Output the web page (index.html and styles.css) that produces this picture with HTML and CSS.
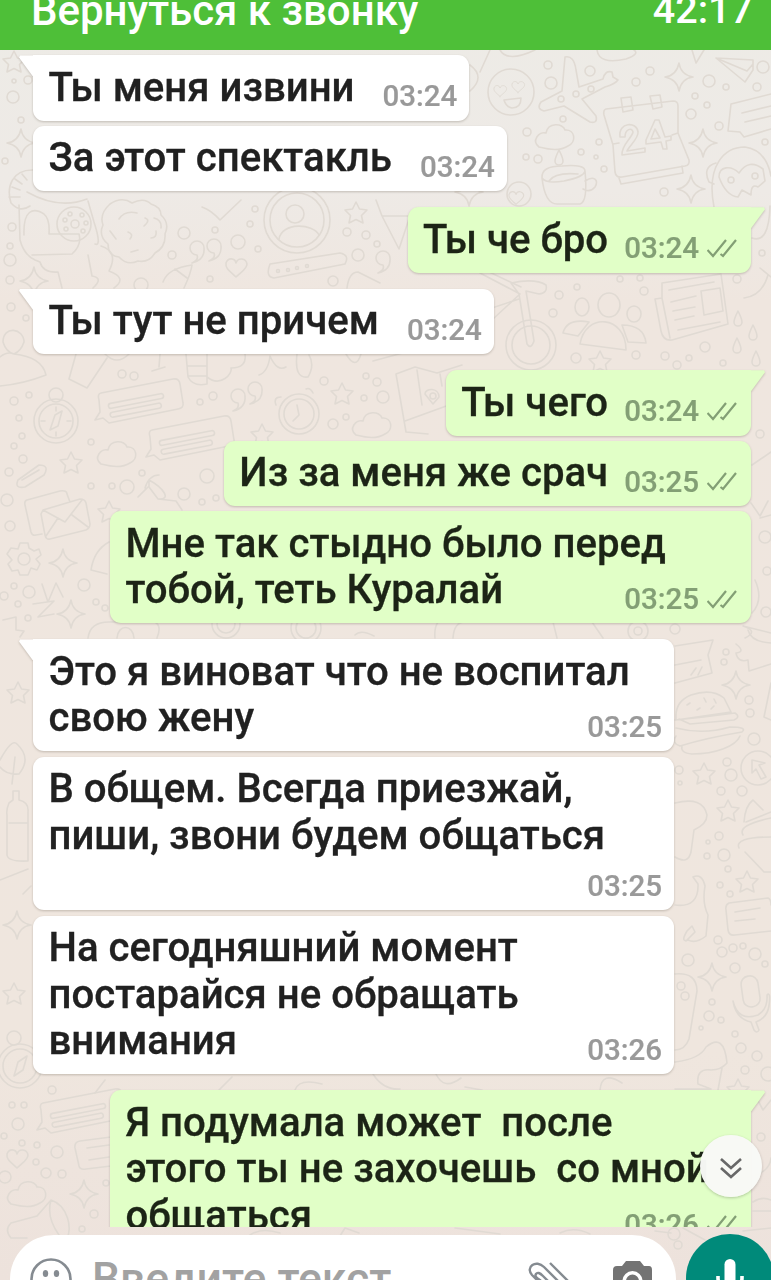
FILE: index.html
```html
<!DOCTYPE html>
<html lang="ru">
<head>
<meta charset="utf-8">
<title>Чат</title>
<link rel="stylesheet" href="styles.css">
</head>
<body>
<div class="screen">
  <svg class="wallpaper" viewBox="0 0 771 1280" aria-hidden="true">
    <defs>
      <path id="ticks" d="M.5 11.500 6 17.500 19 1.500M13.500 15.500 16 17.500 29 1.500"/>
      <path id="star" d="M0-11 3.5-4 11-3 5.500 2.500 7 10 0 6.500-7 10-5.500 2.500-11-3-3.500-4Z"/>
      <path id="spark" d="M0-14Q1.500-2.500 14 0Q2.500 1.500 0 14Q-1.500 2.500-14 0Q-2.500-1.500 0-14Z"/>
      <path id="heart" d="M0 9C-5 4-11 1-10-5C-8-11-1-10 0-5C2-11 10-10 11-4C11 1 5 4 0 9Z"/>
      <path id="drop" d="M0-8Q-4 0-4 3A4 4 0 0 0 4 3Q4 0 0-8Z"/>
      <path id="quote" d="M-4 9Q3 6 1 1A7 7 0 1 1 8-6Q9 6-4 9Z"/>
      <path id="cloud" d="M-16 9C-24 3-16-7-9-5C-7-16 8-15 10-8C20-9 22 4 13 8C5 13-4 12-16 9Z"/>
      <g id="bubble"><path d="M-38-13 34-27Q40-28 41-22L44-3Q45 2 39 3L-30 17-36 12-44 14-39 6-40-6Q-42-12-38-13Z"/><rect x="-30" y="-8" width="56" height="5" rx="2.500" transform="rotate(-11)"/><rect x="-30" y="1" width="52" height="5" rx="2.500" transform="rotate(-11)"/></g>
      <g id="gear"><path d="M-4-16H4L5-11 10-8 15-10 17-4 12 0 16 5 13 11 7 9 4 16H-4L-6 11-12 12-16 5-12 1-17-5-13-11-6-10Z"/><circle r="6"/></g>
    </defs>
    <g class="doodles">
      <!-- small bits -->
      <use href="#star" x="14" y="62"/><use href="#spark" x="21" y="143"/><use href="#spark" x="679" y="77"/><use href="#spark" x="703" y="143"/><use href="#spark" x="691" y="189"/><use href="#spark" x="469" y="192"/>
      <use href="#star" x="356" y="213"/><use href="#spark" x="34" y="281"/><use href="#heart" x="236" y="268"/><use href="#quote" x="196" y="254"/><use href="#quote" x="213" y="252"/><use href="#quote" x="382" y="264"/><use href="#quote" x="237" y="402"/><use href="#quote" x="254" y="395"/>
      <use href="#star" x="342" y="394"/><use href="#star" x="262" y="435"/><use href="#star" x="71" y="463"/><use href="#star" x="109" y="512"/><use href="#spark" x="63" y="563"/><use href="#spark" x="71" y="614"/><use href="#star" x="600" y="362"/>
      <use href="#drop" x="738" y="319"/><use href="#drop" x="753" y="333"/><use href="#drop" x="737" y="346"/><use href="#drop" x="756" y="359"/><use href="#drop" x="559" y="158"/>
      <use href="#cloud" x="555" y="138"/><use href="#cloud" x="372" y="426"/><use href="#cloud" x="117" y="455"/><use href="#cloud" x="27" y="1195"/>
      <use href="#spark" x="736" y="685"/><use href="#star" x="704" y="774"/><use href="#star" x="728" y="811"/><use href="#star" x="747" y="882"/><use href="#spark" x="712" y="977"/><use href="#heart" x="17" y="1159"/><use href="#spark" x="84" y="1194"/><use href="#star" x="738" y="1090"/>
      <use href="#star" x="18" y="693"/><use href="#spark" x="17" y="925"/><use href="#star" x="14" y="994"/>
      <circle cx="13" cy="97" r="6"/><circle cx="14" cy="81" r="2"/><circle cx="28" cy="80" r="4"/><circle cx="21" cy="120" r="3"/><circle cx="5" cy="161" r="3"/>
      <circle cx="548" cy="65" r="4"/><circle cx="551" cy="83" r="6"/><circle cx="590" cy="71" r="5"/><circle cx="636" cy="82" r="4"/><circle cx="650" cy="71" r="4"/><circle cx="709" cy="81" r="6"/><circle cx="726" cy="87" r="3"/><circle cx="763" cy="67" r="6"/><circle cx="757" cy="87" r="4"/><circle cx="695" cy="96" r="3"/><circle cx="707" cy="105" r="3"/><circle cx="691" cy="114" r="5"/><circle cx="719" cy="126" r="4"/><circle cx="563" cy="119" r="3"/><circle cx="527" cy="132" r="4"/><circle cx="526" cy="157" r="3"/><circle cx="538" cy="159" r="4"/><circle cx="581" cy="152" r="3"/><circle cx="599" cy="142" r="3"/><circle cx="596" cy="157" r="2"/><circle cx="604" cy="169" r="3"/><circle cx="664" cy="192" r="4"/><circle cx="765" cy="142" r="3"/>
      <circle cx="12" cy="227" r="4"/><circle cx="10" cy="246" r="3"/><circle cx="10" cy="260" r="6"/><circle cx="10" cy="280" r="4"/><circle cx="11" cy="307" r="4"/><circle cx="26" cy="318" r="3"/><circle cx="184" cy="233" r="6"/><circle cx="172" cy="255" r="4"/><circle cx="215" cy="230" r="3"/><circle cx="238" cy="242" r="7"/><circle cx="258" cy="249" r="3"/><circle cx="250" cy="224" r="3"/><circle cx="255" cy="209" r="3"/><circle cx="347" cy="232" r="4"/><circle cx="366" cy="235" r="4"/><circle cx="377" cy="244" r="3"/><circle cx="358" cy="255" r="6"/><circle cx="333" cy="281" r="5"/><circle cx="210" cy="279" r="3"/><circle cx="141" cy="285" r="7"/>
      <circle cx="122" cy="374" r="4"/><circle cx="134" cy="376" r="4"/><circle cx="14" cy="401" r="4"/><circle cx="29" cy="395" r="3"/><circle cx="19" cy="418" r="3"/><circle cx="22" cy="436" r="3"/><circle cx="200" cy="402" r="3"/><circle cx="213" cy="396" r="4"/><circle cx="324" cy="381" r="4"/><circle cx="366" cy="376" r="3"/><circle cx="377" cy="382" r="4"/><circle cx="383" cy="397" r="6"/><circle cx="364" cy="398" r="3"/><circle cx="333" cy="424" r="5"/><circle cx="346" cy="417" r="3"/>
      <circle cx="620" cy="279" r="3"/><circle cx="640" cy="278" r="3"/><circle cx="559" cy="295" r="4"/><circle cx="577" cy="287" r="3"/><circle cx="644" cy="291" r="4"/><circle cx="737" cy="279" r="4"/><circle cx="553" cy="313" r="4"/><circle cx="705" cy="347" r="5"/><circle cx="576" cy="358" r="5"/><circle cx="636" cy="355" r="4"/><circle cx="665" cy="356" r="4"/><circle cx="677" cy="365" r="4"/><circle cx="689" cy="358" r="3"/><circle cx="723" cy="363" r="3"/><circle cx="762" cy="253" r="3"/><circle cx="760" cy="434" r="4"/><circle cx="765" cy="537" r="6"/><circle cx="767" cy="571" r="4"/><circle cx="766" cy="612" r="5"/>
      <circle cx="14" cy="446" r="3"/><circle cx="23" cy="459" r="4"/><circle cx="9" cy="472" r="4"/><circle cx="7" cy="500" r="6"/><circle cx="10" cy="526" r="5"/><circle cx="91" cy="442" r="3"/><circle cx="91" cy="486" r="3"/><circle cx="112" cy="486" r="3"/><circle cx="127" cy="487" r="7"/><circle cx="142" cy="473" r="3"/><circle cx="184" cy="494" r="6"/><circle cx="207" cy="476" r="7"/><circle cx="202" cy="502" r="3"/><circle cx="216" cy="498" r="3"/><circle cx="84" cy="585" r="6"/><circle cx="29" cy="592" r="6"/><circle cx="14" cy="586" r="3"/><circle cx="4" cy="596" r="4"/><circle cx="18" cy="604" r="3"/><circle cx="28" cy="618" r="3"/><circle cx="96" cy="602" r="3"/><circle cx="105" cy="608" r="3"/>
      <circle cx="726" cy="652" r="3"/><circle cx="724" cy="662" r="3"/><circle cx="749" cy="700" r="4"/><circle cx="750" cy="713" r="4"/><circle cx="754" cy="739" r="6"/><circle cx="727" cy="762" r="4"/><circle cx="731" cy="775" r="6"/><circle cx="679" cy="770" r="4"/><circle cx="680" cy="783" r="2"/><circle cx="721" cy="791" r="4"/><circle cx="742" cy="791" r="5"/><circle cx="719" cy="836" r="4"/><circle cx="708" cy="842" r="2"/><circle cx="707" cy="856" r="3"/><circle cx="724" cy="855" r="6"/><circle cx="728" cy="869" r="3"/><circle cx="720" cy="885" r="3"/><circle cx="730" cy="894" r="3"/>
      <circle cx="718" cy="940" r="4"/><circle cx="722" cy="952" r="5"/><circle cx="733" cy="948" r="4"/><circle cx="743" cy="946" r="3"/><circle cx="755" cy="954" r="6"/><circle cx="735" cy="968" r="5"/><circle cx="688" cy="960" r="6"/><circle cx="681" cy="986" r="4"/><circle cx="685" cy="996" r="4"/><circle cx="712" cy="1002" r="3"/><circle cx="709" cy="1016" r="5"/><circle cx="721" cy="1020" r="3"/><circle cx="701" cy="1028" r="2"/><circle cx="735" cy="1034" r="3"/><circle cx="741" cy="1048" r="5"/><circle cx="757" cy="1056" r="5"/><circle cx="745" cy="1070" r="4"/><circle cx="768" cy="1074" r="7"/><circle cx="765" cy="964" r="3"/>
      <circle cx="52" cy="1090" r="4"/><circle cx="12" cy="1105" r="3"/><circle cx="24" cy="1105" r="3"/><circle cx="18" cy="1124" r="6"/><circle cx="4" cy="1136" r="3"/><circle cx="22" cy="1143" r="3"/><circle cx="37" cy="1145" r="3"/><circle cx="57" cy="1152" r="6"/><circle cx="36" cy="1162" r="3"/><circle cx="46" cy="1173" r="5"/><circle cx="62" cy="1174" r="4"/><circle cx="5" cy="1177" r="6"/><circle cx="94" cy="1214" r="4"/><circle cx="106" cy="1183" r="3"/><circle cx="82" cy="1229" r="3"/><circle cx="761" cy="1137" r="4"/><circle cx="678" cy="1245" r="4"/><circle cx="674" cy="1234" r="6"/>
      <!-- emoji, plane, calendar, cup -->
      <circle cx="511" cy="92" r="23"/><use href="#heart" transform="translate(500 91) scale(.6)"/><use href="#heart" transform="translate(518 87) scale(.6)"/><path d="M504 100 521 98Q521 108 512 108Q506 107 504 100Z"/>
      <path d="M565 57Q574 55 576 70L579 87 603 79Q605 70 612 72L613 77 618 80Q615 84 605 87L582 99 596 116Q598 124 590 122L564 106 544 111Q536 109 541 102L562 91Z"/><circle cx="561" cy="99" r="3"/><circle cx="576" cy="94" r="3"/><circle cx="591" cy="89" r="3"/>
      <path d="M606 109 673 101Q678 101 678 106V133L689 160Q690 165 685 166L622 177Q616 178 615 172L613 145 604 115Q603 110 606 109ZM613 144 619 143M672 135 678 133M619 178 621 184 683 173 682 166M621 98 631 97 633 110 623 112ZM650 96 660 95 662 107 653 109Z"/>
      <path d="M620 137C618 122 637 121 638 132C639 138 629 146 627 151L645 148V152L622 155C621 145 632 138 633 132C632 127 625 129 625 137ZM655 120 659 120 665 137 671 136 671 140 666 141 667 149 663 149 661 142 646 144 646 140ZM655 129 651 139 660 138Z"/>
      <path d="M542 178Q541 166 562 166Q585 164 585 171Q584 177 564 181Q546 184 542 178Q545 204 557 204H580Q588 202 585 171M585 181C594 175 599 180 595 187Q590 193 583 189M549 181Q555 172 578 174"/>
      <path d="M716 58 753 60 753 70 745 82ZM716 58 747 71 753 64M692 50 696 63 704 50M731 104 771 94M731 104 728 131 740 132 744 137 771 129M742 113 771 106M745 122 771 116M597 50Q599 65 626 59Q640 54 634 50M500 50Q507 63 535 50M480 72 490 50M470 65Q486 77 470 91"/>
      <path d="M714 207C706 166 724 147 745 147Q766 150 771 176M716 163Q702 167 709 182L714 184M719 177C719 166 731 165 739 173Q749 158 763 169L765 181 758 187Q751 183 751 195L742 190 738 197Q726 196 719 177"/><circle cx="731" cy="180" r="3"/><circle cx="755" cy="176" r="3"/><circle cx="519" cy="194" r="12"/><use href="#heart" transform="translate(516 198) scale(.7)"/>
      <!-- astronaut, cookie, contact, belt -->
      <path d="M34 170C12 169 6 187 11 203Q20 213 30 206M22 174 27 180M15 179 22 184M12 187 20 190M9 197 20 197M27 192Q59 210 87 199M19 205 20 240Q24 255 35 260L40 262Q43 273 58 272L62 288M24 235C23 210 33 207 44 214Q50 219 49 234L79 234Q82 245 72 254L32 255M88 201 94 222Q102 247 95 244M101 246Q119 252 109 271Q128 278 114 288M88 255 92 276Q104 278 93 288M202 207Q211 210 220 220L241 200"/><circle cx="74" cy="224" r="17"/><circle cx="75" cy="224" r="4"/><circle cx="65" cy="220" r="2"/><circle cx="70" cy="214" r="2"/><circle cx="82" cy="215" r="2"/><circle cx="86" cy="223" r="2"/><circle cx="83" cy="231" r="2"/><circle cx="66" cy="229" r="2"/>
      <path d="M110 204Q122 196 132 203Q144 197 151 204Q161 207 161 215Q170 223 165 234Q166 247 155 253Q149 263 138 261Q127 266 119 257Q108 256 108 244Q98 236 103 225Q99 214 110 204ZM119 219Q125 210 137 213M145 218Q151 220 144 226M128 232Q134 234 130 239M151 238Q157 238 156 231M131 252 138 250M110 231 116 239M154 218Q162 220 161 228"/>
      <circle cx="297" cy="220" r="33"/><circle cx="297" cy="220" r="27"/><circle cx="295" cy="214" r="9"/><path d="M279 239C282 222 313 223 319 235M270 264 340 253Q350 255 345 264L274 278Q265 277 270 264ZM376 200 382 216 399 249 411 213M382 216 408 216M163 282Q168 268 192 265Q191 273 184 288M175 269 187 278M347 288Q349 272 358 272L380 283"/><circle cx="278" cy="271" r="1.500"/><circle cx="288" cy="270" r="1.500"/><circle cx="297" cy="268" r="1.500"/><circle cx="307" cy="266" r="1.500"/>
      <!-- person, tag, thumbs, clock, map -->
      <path d="M3 342C3 325 24 328 24 342Q21 351 14 354Q6 352 3 342ZM0 357Q7 351 14 354Q42 357 46 375 23 384 0 386M76 354 69 379 87 388 107 358M105 354Q117 366 129 354M186 354 188 377Q193 387 207 384L207 354M188 366H207M188 376H207M207 377C221 388 233 373 231 368Q247 368 245 354M160 354 159 367M152 371 165 367M297 354Q294 379 308 377Q315 365 309 355M259 375Q268 372 270 356 277 372 286 367M346 354Q356 371 361 354M373 361 410 351"/>
      <circle cx="56" cy="421" r="22"/><circle cx="56" cy="421" r="17"/><circle cx="56" cy="395" r="7"/><path d="M50 430 55 415 62 411 58 426ZM56 407V411M56 432V436M41 421H45M67 421H71"/>
      <use href="#bubble" x="139" y="406"/><use href="#bubble" x="190" y="443"/>
      <circle cx="299" cy="414" r="20"/><circle cx="299" cy="414" r="15"/><path d="M297 405 299 415 293 421M276 405Q273 397 281 397M306 389Q310 387 313 393"/>
      <path d="M396 374 415 367 437 373 462 365M396 374 406 432 428 434M405 421 449 405M417 370 422 405M440 374 442 386M425 394C425 388 439 387 439 397L433 404Z"/><circle cx="433" cy="396" r="3"/>
      <!-- bicycle, people, newspaper -->
      <circle cx="531" cy="345" r="25"/><circle cx="531" cy="345" r="19"/><path d="M527 344 519 294 511 283Q535 278 546 285Q548 293 539 294L526 291 534 341Q531 350 527 344ZM480 273 520 294 493 319M485 270 521 287M492 308 519 299"/>
      <ellipse cx="609" cy="305" rx="11" ry="12"/><ellipse cx="582" cy="307" rx="7" ry="9"/><ellipse cx="634" cy="314" rx="7" ry="8"/><path d="M580 344C585 312 626 315 626 350ZM563 333Q567 318 589 322L578 336ZM622 325Q644 325 646 343L628 342Z"/>
      <path d="M662 283 721 274 728 324 672 340Q663 341 661 331L655 299 662 298ZM662 298 670 338M669 290 714 282M701 291 720 288 723 311 704 315ZM671 302 696 296M673 311 695 307M675 320 694 316M678 330 720 322M744 298Q762 296 768 275M760 268 771 277M752 238Q769 244 770 206"/>
      <!-- paper clip, letters, gear, text -->
      <path d="M18 480 39 465Q50 465 44 475L25 487Q14 489 18 480ZM22 480 39 470M27 500 60 491Q67 490 67 494L70 502M27 500Q24 501 25 505L31 532Q32 536 36 535L42 534M43 510 80 499Q85 499 86 503L90 524Q90 528 86 530L50 539Q46 540 45 535L41 514ZM43 510 65 522 82 500M46 536 58 518M88 527 72 515"/>
      <use href="#gear" x="24" y="559"/>
      <path d="M42 584 48 602 56 583 63 597M33 604 54 601 38 617 54 614M3 620 16 617 16 630 24 631 20 637M91 570Q94 550 109 542M91 570 107 574M145 488Q149 475 159 475M138 497 148 487M149 480C162 487 173 500 158 499L149 487ZM158 499 176 501 182 510M88 638Q90 622 109 622H155Q162 626 157 638M117 638C118 624 133 624 134 638"/><circle cx="226" cy="624" r="14"/><circle cx="226" cy="624" r="9"/><circle cx="306" cy="628" r="15"/><circle cx="306" cy="628" r="10"/><path d="M355 635Q361 629 374 636M435 638Q434 628 438 622M453 638Q454 622 465 622M553 622 557 638M592 622 603 638"/><circle cx="638" cy="631" r="10"/><circle cx="638" cy="631" r="4"/><circle cx="675" cy="629" r="5"/>
      <path d="M751 503 760 516 768 501M760 518 771 515M752 465 771 452M745 638Q759 631 743 626L771 633M755 580Q764 600 752 613"/>
      <!-- burger, ticket, cupcake -->
      <path d="M675 646 713 640 708 655 712 673 675 683M675 665 701 660M691 675 696 668M698 675 702 667M676 716Q676 701 691 695Q712 688 724 698L731 712 676 720ZM675 720Q706 717 735 713Q741 717 734 720L690 724 679 719M676 728Q703 735 730 727 748 727 742 732Q706 738 680 746Q671 743 676 736M682 746Q680 753 692 754C716 754 736 746 740 736"/>
      <path d="M687 705 690 703M697 710 700 708M704 698 706 702M714 699 716 703M711 709 714 706"/>
      <path d="M736 644Q746 652 736 653Q738 663 748 660L749 671 771 664M748 630Q751 642 771 643M771 683 764 717 771 720"/><circle cx="758" cy="768" r="17"/><path d="M752 760 765 763 759 765 766 777 761 779 756 769 752 773Z"/>
      <path d="M675 803Q703 796 707 815Q707 824 694 830L691 852Q688 865 675 857M675 905Q699 908 698 884L693 877Q702 873 705 886Q702 903 708 915L706 936Q696 944 688 940Q680 943 687 931L692 926 695 932 686 941M744 822Q745 806 753 800L763 810M746 822 771 812M743 835Q737 825 771 818M739 848Q734 837 771 837M745 852 764 872H771"/>
      <path d="M729 903 768 898Q771 899 771 905M729 903Q725 905 726 910L728 930Q729 936 735 935L771 931M735 912 760 908M735 921 755 919M675 974Q697 972 697 991L689 1039Q685 1050 675 1050M675 1062Q700 1059 706 1047Q724 1032 727 1063Q721 1070 711 1070Q696 1068 698 1084L711 1089 675 1089M722 1068 718 1090"/>
      <rect x="742" y="976" width="17" height="31" rx="8" transform="rotate(-8 750 991)"/><path d="M733 1001Q738 1022 758 1015 768 1009 767 995 771 991 769 1006Q767 1018 756 1022L759 1030Q757 1034 754 1030L751 1022Q736 1019 733 1001Z"/>
      <!-- left edge -->
      <path d="M9 803Q6 810 7 815V855Q8 862 28 861V812Q29 802 19 800V791H13V800ZM9 823H28M0 760Q12 738 17 744 32 758 19 774 6 775 0 767M15 757 12 784M0 880 28 869M23 894 31 886"/><circle cx="20" cy="1066" r="22"/><circle cx="20" cy="1066" r="17"/><circle cx="14" cy="1038" r="7"/><path d="M14 1076 18 1062 27 1056 23 1070Z"/>
      <!-- foot of the chat -->
      <use href="#bubble" x="81" y="1116"/><path d="M111 1137 80 1141Q74 1142 75 1148L79 1166Q80 1170 86 1169L111 1166M87 1148 109 1145M89 1160 109 1157M11 1223 37 1216 51 1200C69 1206 72 1230 67 1238M51 1200Q46 1217 59 1235M11 1223Q4 1230 11 1238H27M95 1093 105 1080M219 1090 232 1077M295 1090Q299 1078 322 1084M373 1074Q383 1090 400 1089M436 1074Q444 1091 461 1078M465 1087 482 1090M600 1090Q602 1070 622 1083M756 1097 763 1110 771 1100M753 1176Q770 1171 771 1158M753 1202Q762 1196 771 1200M753 1211H771M560 1233Q574 1226 590 1234M655 1231 671 1233M683 1228 705 1240M743 1231 771 1228M250 1235Q262 1227 280 1233M340 1236 345 1228 359 1233M455 1228 500 1234"/>
    </g>
  </svg>

  <header class="call-bar"><span>Вернуться к звонку</span><span class="call-time">42:17</span></header>

  <main class="chat">
    <div class="msg in first"><p>Ты меня извини</p><span class="meta">03:24</span></div>
    <div class="msg in"><p>За этот спектакль</p><span class="meta">03:24</span></div>
    <div class="msg out first"><p>Ты че бро</p><span class="meta">03:24<svg class="ticks" viewBox="0 0 30 20"><use href="#ticks"/></svg></span></div>
    <div class="msg in first"><p>Ты тут не причем</p><span class="meta">03:24</span></div>
    <div class="msg out first"><p>Ты чего</p><span class="meta">03:24<svg class="ticks" viewBox="0 0 30 20"><use href="#ticks"/></svg></span></div>
    <div class="msg out"><p>Из за меня же срач</p><span class="meta">03:25<svg class="ticks" viewBox="0 0 30 20"><use href="#ticks"/></svg></span></div>
    <div class="msg out wide"><p>Мне так стыдно было перед<br>тобой, теть Куралай</p><span class="meta">03:25<svg class="ticks" viewBox="0 0 30 20"><use href="#ticks"/></svg></span></div>
    <div class="msg in wide first"><p>Это я виноват что не воспитал<br>свою жену</p><span class="meta">03:25</span></div>
    <div class="msg in wide time-below"><p>В общем. Всегда приезжай,<br>пиши, звони будем общаться</p><span class="meta">03:25</span></div>
    <div class="msg in wide"><p>На сегодняшний момент<br>постарайся не обращать<br>внимания</p><span class="meta">03:26</span></div>
    <div class="msg out wide first"><p>Я подумала может&nbsp; после<br>этого ты не захочешь&nbsp; со мной<br>общаться</p><span class="meta">03:26<svg class="ticks" viewBox="0 0 30 20"><use href="#ticks"/></svg></span></div>
  </main>

  <button class="scroll-down" aria-label="Вниз"><svg viewBox="0 0 24 24"><path d="M2 3 12 12 22 3M2 12 12 21 22 12"/></svg></button>

  <footer class="composer">
    <div class="field">
      <svg class="smile" viewBox="0 0 42 42"><circle cx="21" cy="21" r="19.500"/><ellipse class="eye" cx="15.500" cy="15.500" rx="2.700" ry="3.500"/><ellipse class="eye" cx="26.500" cy="15.500" rx="2.700" ry="3.500"/><path d="M10 25Q21 38 32 25Z"/></svg>
      <span class="placeholder">Введите текст</span>
      <svg class="clip" viewBox="0 0 44 44"><path d="M22 3 42 23M36 27 16 7C8-1-3 7 4 15L28 39M29 30 15 16Q10 11 8 14T12 20L31 39"/></svg>
      <svg class="camera" viewBox="0 0 40 36"><path fill-rule="evenodd" d="M13 0H27L31 5H36Q39 5 39 9V32Q39 36 35 36H4Q0 36 0 32V9Q0 5 4 5H9ZM19.500 10A10 10 0 1 0 19.500 30A10 10 0 1 0 19.500 10ZM19.500 13.500A6.500 6.500 0 1 1 19.500 26.500A6.500 6.500 0 1 1 19.500 13.500Z"/></svg>
    </div>
    <button class="mic" aria-label="Голосовое сообщение"><svg viewBox="0 0 30 42"><rect x="9.500" y="0" width="11" height="26" rx="5.500"/><path d="M3 17V19A12 12 0 0 0 27 19V17M15 31V40"/></svg></button>
  </footer>
</div>
</body>
</html>
```

FILE: styles.css
```css
* { box-sizing: border-box; }
body { margin: 0; overflow: hidden; font-family: Roboto, "Noto Sans", sans-serif; font-weight: 500; }
button { border: 0; padding: 0; }
p { margin: 0; }

.screen {
  position: relative;
  display: flex;
  flex-direction: column;
  width: 771px;
  height: 1280px;
  overflow: hidden;
  background: linear-gradient(#edebe6 0, #eeeae6 190px, #efe6df 300px, #efe6de 1050px, #ede2dc 1280px);
}
.wallpaper { position: absolute; inset: 0; width: 771px; height: 1280px; }
.doodles { fill: none; stroke: #e0dad3; stroke-width: 1.6; stroke-linejoin: round; stroke-linecap: round; }

.call-bar {
  position: relative;
  flex: none;
  display: flex;
  justify-content: space-between;
  align-items: flex-end;
  height: 50px;
  padding: 0 18px 15px 31px;
  overflow: hidden;
  background: #4ebf38;
  color: #fff;
  font-size: 42px;
  line-height: 48px;
  white-space: nowrap;
}
.call-time { padding-bottom: 2px; font-size: 39.500px; line-height: 46px; }

.chat {
  position: relative;
  flex: none;
  display: flex;
  flex-direction: column;
  gap: 5.2px;
  height: 1177px;
  padding: 5.4px 20px 0 33px;
  overflow: hidden;
}
.msg {
  position: relative;
  flex: none;
  display: flex;
  align-items: flex-end;
  padding: 9.300px 12px 9.300px 15.500px;
  border-radius: 11px;
  font-size: 40.150px;
  line-height: 46.700px;
  color: #212121;
  filter: drop-shadow(0 1px 1px rgba(90, 80, 65, .3));
  white-space: nowrap;
}
.msg p { -webkit-text-stroke: .3px currentColor; }
.in { align-self: flex-start; gap: 28px; background: #fff; }
.out { align-self: flex-end; gap: 16px; padding-right: 14px; background: #e1ffc7; color: #1c2416; }
.out:not(.wide) { padding-left: 15px; }
.msg + .first { margin-top: 11px; }
.in.first { border-top-left-radius: 0; }
.out.first { border-top-right-radius: 0; }
.first::before { content: ""; position: absolute; top: 0; width: 15px; height: 21px; background: inherit; }
.in.first::before { left: -14px; clip-path: polygon(0 2px, 1px 0, 100% 0, 100% 100%, 93% 100%); }
.out.first::before { right: -14px; clip-path: polygon(0 0, 93% 0, 100% 2px, 7% 100%, 0 100%); }

.wide { display: grid; width: 641px; }
.wide > * { grid-area: 1 / 1; }
.wide .meta { justify-self: end; align-self: end; }
.time-below { padding-bottom: 51px; }
.time-below .meta { margin-bottom: -42px; }

.meta {
  display: flex;
  align-items: center;
  gap: 8px;
  font-size: 29.500px;
  line-height: 35px;
  color: #999;
  -webkit-text-stroke: .2px currentColor;
  transform: translateY(2.500px);
}
.out .meta { color: #839f75; }
.ticks { width: 30px; height: 20px; fill: none; stroke: currentColor; stroke-width: 2.2; }

.scroll-down {
  position: absolute;
  left: 700px;
  top: 1135px;
  display: grid;
  place-items: center;
  width: 62px;
  height: 62px;
  border-radius: 50%;
  background: rgba(248, 249, 246, .98);
  box-shadow: 0 1px 3px rgba(0, 0, 0, .22);
}
.scroll-down svg { width: 24px; height: 24px; margin-top: 4px; fill: none; stroke: #686868; stroke-width: 2.6; }

.composer {
  position: relative;
  flex: none;
  display: flex;
  align-items: flex-start;
  gap: 11px;
  padding: 7px 0 0 10px;
}
.field {
  flex: none;
  display: flex;
  align-items: flex-start;
  width: 666px;
  height: 88px;
  margin-top: 1px;
  padding: 0 23px 0 20px;
  border-radius: 44px;
  background: #fff;
}
.smile { width: 42px; height: 42px; margin-top: 23px; fill: none; stroke: #858b91; stroke-width: 2.6; }
.smile .eye { fill: #858b91; stroke: none; }
.placeholder { flex: 1; margin: 18px 0 0 20px; font-size: 44.500px; line-height: 52px; color: #a2a2a2; white-space: nowrap; }
.clip { width: 44px; height: 44px; margin: 25px 41px 0 0; fill: none; stroke: #858b91; stroke-width: 2.4; }
.camera { width: 40px; height: 36px; margin-top: 26px; fill: #737373; }
.mic { display: grid; justify-items: center; align-items: start; flex: none; width: 88px; height: 88px; margin-left: -1px; padding-top: 25px; border-radius: 50%; background: #008a7a; }
.mic svg { width: 30px; height: 42px; fill: #fff; }
.mic path { fill: none; stroke: #fff; stroke-width: 3.6; }
```
